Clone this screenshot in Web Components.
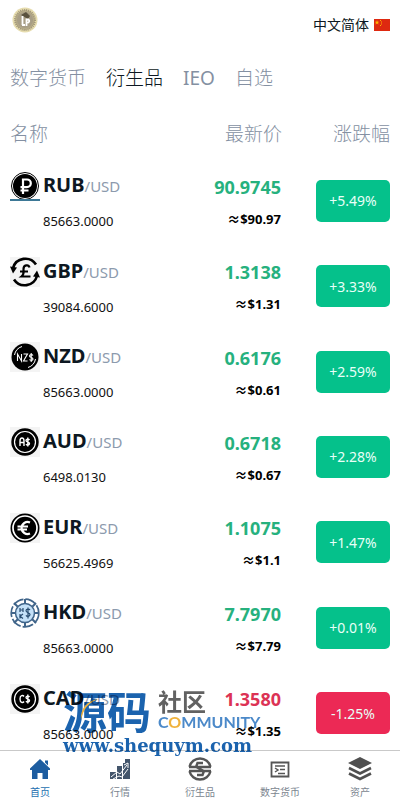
<!DOCTYPE html>
<html lang="zh-CN">
<head>
<meta charset="utf-8">
<meta name="viewport" content="width=device-width, initial-scale=1">
<title>行情</title>
<style>
body{margin:0;background:#fff;color:#0d1822;font-family:"Noto Sans","Noto Sans CJK SC",sans-serif}
</style>
</head>
<body>
<market-app></market-app>
<script>
const define=(name,html)=>customElements.define(name,class extends HTMLElement{
  connectedCallback(){
    if(this.shadowRoot)return;
    const root=this.attachShadow({mode:'open'});
    const t=document.createElement('template');
    t.innerHTML=typeof html==='function'?html(this):html;
    root.append(t.content.cloneNode(true));
  }
});
const coins={
RUB:`<circle cx="15" cy="15" r="13.500" fill="#fff" stroke="#000" stroke-width="1"/><circle cx="15" cy="15" r="12" fill="#000"/><path d="M13 23V8.500h4a3.800 3.800 0 0 1 0 7.600H10.500M10.500 19.500h8" fill="none" stroke="#fff" stroke-width="2.200"/><path d="M0 29h30" stroke="#3d7896" stroke-width="2"/>`,
GBP:`<path fill="#f4f4f4" d="M0 0h30v30H0z"/><g fill="none" stroke="#000" stroke-width="2.600"><path d="M3 11A12.800 12.800 0 0 1 26 7.500M27 19A12.800 12.800 0 0 1 4 22.500"/><path d="M19.500 10.500c-1-3.500-6-2.500-6 1.500 0 3 1 5-2 7.500h9M10 14.500h8" stroke-width="2.200"/></g><path d="M0 9.500l7 1-4 6zM30 20.500l-7-1 4-6z"/>`,
NZD:`<path fill="#f4f4f4" d="M0 0h30v30H0z"/><circle cx="15" cy="15" r="13.500"/><path d="M4.500 13A11 11 0 0 1 12 4.500M25.500 17A11 11 0 0 1 18 25.500" fill="none" stroke="#fff"/><path d="M7.500 19v-7l4 7v-7M13.500 12h4l-4 7h4M23 13.500c-1-1.500-3.500-1-3.500.5 0 2 3.500 1 3.500 3 0 1.500-2.500 2-3.500.5M21.200 11v9" fill="none" stroke="#fff" stroke-width="1.100"/>`,
AUD:`<path fill="#f4f4f4" d="M0 0h30v30H0z"/><circle cx="15" cy="15" r="13.700"/><circle cx="15" cy="15" r="10.500" fill="none" stroke="#fff" stroke-width="1.200"/><path d="M10 19v-5q0-3 2-3t2 3v5M10 15.500h4M19.500 13c-1-1.500-3.500-1-3.500.6 0 2 3.500 1 3.500 3 0 1.600-2.500 2-3.500.5M17.800 10.500v9" fill="none" stroke="#fff" stroke-width="1.400"/>`,
EUR:`<path fill="#f4f4f4" d="M0 0h30v30H0z"/><circle cx="15" cy="15" r="14.500"/><circle cx="15" cy="15" r="12" fill="none" stroke="#fff" stroke-width="1.700"/><path d="M20 9.500a6 6 0 1 0 0 11M7.500 13.500H18M7.500 16.500H17" fill="none" stroke="#fff" stroke-width="2.200"/>`,
HKD:`<circle cx="15" cy="15" r="13.800" fill="#fff" stroke="#40658a" stroke-width="1.700" stroke-dasharray="11 2"/><path d="M15 1v5M4 5l4 4M1 15h5M4 25l4-4M15 29v-5M26 25l-4-4M29 15h-5M26 5l-4 4" stroke="#40658a" stroke-width="2"/><circle cx="15" cy="15" r="9.500" fill="#c4e1f8" stroke="#40658a" stroke-width="1.500"/><path d="M10 10v4M13 10v4M10 12h3M10 16v4.500M13 16l-3 2.200 3 2.300M20 12c-1-1.500-4-1-4 .8 0 2.200 4 1.600 4 3.800 0 2-3 2.400-4 .8M18 9.500v11" fill="none" stroke="#284c70" stroke-width="1.200"/>`,
CAD:`<path fill="#f4f4f4" d="M0 0h30v30H0z"/><circle cx="15" cy="15" r="13.700"/><circle cx="15" cy="15" r="10.500" fill="none" stroke="#fff" stroke-width="1.200"/><path d="M14 12.500c-1-1.500-4-1.500-4 2.500s3 4 4 2.500M19.500 13c-1-1.500-3.500-1-3.500.6 0 2 3.500 1 3.500 3 0 1.600-2.500 2-3.500.5M17.800 10.500v9" fill="none" stroke="#fff" stroke-width="1.400"/>`
};
const navs={
home:`<path fill="#1d5da0" d="M12 2 22 11.500V13h-2v9h-5.500v-6h-5v6H4v-9H2v-1.500zM17 3.500h3v5l-3-3z"/>`,
chart:`<path fill="#43556b" d="M2 15h6v7H2zM9 9h5v13H9zM15 6h3v16h-3zM17 2h5v20h-5z"/><path d="M3 20l6-5 3 2 7-9M16 8l4-2v5M5 22l6-3 3 1 6-8" fill="none" stroke="#fff" stroke-width="1"/>`,
swap:`<g fill="none" stroke="#555" stroke-width="2.400"><path d="M1.500 9.700A10.800 10.800 0 0 1 22.500 9.700M22.500 14.300A10.800 10.800 0 0 1 1.500 14.300"/><path d="M1 10h8M15 6H9.500L8 10l8 4-1.500 4H9M15 14h8M9 10h14M1 14h14"/></g>`,
news:`<path d="M3.500 5.500h17v14h-17z" fill="none" stroke="#555" stroke-width="1.800"/><path d="M7 9h10M12 12.500h5M10 16.500h7M7 11l3 2-3 2" fill="none" stroke="#555" stroke-width="1.500"/>`,
stack:`<path fill="#505050" d="M12 0 24 6 12 12 0 6z"/><path d="M1 11l11 5.500L23 11M1 16.500 12 22l11-5.500" fill="none" stroke="#505050" stroke-width="2.600"/>`
};
define('site-header',`<style>
:host{display:flex;align-items:center;justify-content:space-between;height:40px;padding:0 10px}
.logo{display:block;margin-left:2px}
button{display:flex;align-items:center;gap:5px;border:0;background:none;padding:0;margin-top:10px;font:14px/20px "Noto Sans","Noto Sans CJK SC",sans-serif;color:#0d1822}
svg{display:block}
</style>
<svg class="logo" width="26" height="26" viewBox="0 0 26 26"><circle cx="13" cy="13" r="12.500" fill="#e6dcae"/><circle cx="13" cy="13" r="10" fill="#b5aa87" stroke="#a0967a" stroke-width="2" stroke-dasharray="1 1"/><circle cx="13" cy="13" r="8" fill="#a89e86"/><path d="M9 8l5-3 4 4-2 3z" fill="#5a523e"/><path d="M10.500 9v9M10 18h3M14.500 19v-6.500h2q2 2-1 3.500" fill="none" stroke="#fff" stroke-width="1.800"/></svg>
<button type="button">中文简体<svg width="16" height="12" viewBox="0 0 16 12"><path fill="#de2910" d="M0 0h16v12H0z"/><path fill="#ffb400" d="M3 1l.6 1.700h1.700L4 3.800l.5 1.700L3 4.500 1.500 5.500 2 3.800.7 2.700h1.700zM6 1h1v1H6zM7 2.500h1v1H7zM7 4.500h1v1H7zM6 6h1v1H6z"/></svg></button>`);
define('market-tabs',`<style>
:host{display:flex;gap:20px;padding:24px 10px 0}
button{border:0;background:none;padding:0;font:300 19px/28px "Noto Sans","Noto Sans CJK SC",sans-serif;color:#8490a2}
.on{color:#0d1822}
.latin{font-weight:400}
</style><button type="button">数字货币</button><button type="button" class="on">衍生品</button><button type="button" class="latin">IEO</button><button type="button">自选</button>`);
define('list-head',`<style>
:host{display:grid;grid-template-columns:1fr 1fr 88px;column-gap:20px;padding:28px 10px 10px;font-weight:300;font-size:19px;line-height:28px;color:#8490a2}
span+span{text-align:right}
</style><span>名称</span><span>最新价</span><span>涨跌幅</span>`);
define('coin-row',e=>{const[s,v,p,u,c]=e.getAttribute('data').split(',');return`<style>
:host{display:grid;grid-template-columns:30px 1fr auto 74px;align-items:center;padding:0 10px}
svg{display:block;margin-bottom:29px}
.name{padding-left:3px;padding-top:1px}
b{font-size:20px;line-height:28px}
.name span{font-size:15px;color:#8c9aad}
.sub{font-size:13px;line-height:20px;padding-top:12px;color:#111}
.price{text-align:right;font-weight:700;margin-right:35px}
.p{font-size:18px;line-height:28px;color:${c[0]==='-'?'#dc3355':'#26b17e'}}
.u{font-size:13px;line-height:20px;padding-top:8px;color:#000}
.badge{display:grid;place-items:center;height:42px;border-radius:5px;font-size:14px;color:#e8fff7;background:${c[0]==='-'?'#ec2955':'#05c18b'}}
</style><svg width="30" height="30" viewBox="0 0 30 30">${coins[s]}</svg>
<div class="name"><div><b>${s}</b><span>/USD</span></div><div class="sub">${v}</div></div>
<div class="price"><div class="p">${p}</div><div class="u">≈$${u}</div></div><div class="badge">${c}</div>`});
define('nav-item',e=>`<style>
:host{flex:1;display:block}
a{display:flex;flex-direction:column;align-items:center;gap:3px;padding-top:6px;font-size:10px;line-height:16px;color:${e.hasAttribute('active')?'#1d6fb0':'#7b858f'};text-decoration:none}
</style><a href="#"><svg width="24" height="24" viewBox="0 0 24 24">${navs[e.getAttribute('icon')]}</svg><slot></slot></a>`);
define('bottom-nav',`<style>:host{position:fixed;inset:auto 0 0;display:flex;height:49px;border-top:1px solid #c9c9c9;background:#fff}</style>
<nav-item icon="home" active>首页</nav-item><nav-item icon="chart">行情</nav-item><nav-item icon="swap">衍生品</nav-item><nav-item icon="news">数字货币</nav-item><nav-item icon="stack">资产</nav-item>`);
define('site-mark',`<style>
:host{position:fixed;z-index:2;left:63px;bottom:44px;pointer-events:none;mix-blend-mode:multiply;color:#1b63ae}
.top{display:flex;gap:6px;align-items:center}
.big{display:grid;position:relative;font:700 44px/44px "Noto Sans CJK SC",sans-serif}
svg{position:absolute;left:16px;top:8px}
.cn{padding-left:1px;font:700 24px/24px "Noto Sans CJK SC",sans-serif;color:#626262}
.en{padding-left:1px;font:700 16px/18px Lato,sans-serif;color:#4b89c9}
i{font-style:normal;color:#f0b23c}
.url{padding-top:4px;font:700 18px/20px "DejaVu Serif",serif}
</style><div class="top"><div class="big">源码<svg width="22" height="26" viewBox="0 0 22 26"><path d="M2 24C1 13 8 4 20 3 10 6 4 13 2 24z" fill="#f0b23c"/></svg></div><div><div class="cn">社区</div><div class="en">C<i>O</i>MMUNITY</div></div></div><div class="url">www.shequym.com</div>`);
define('market-app',`<style>
:host{display:flex;flex-direction:column;box-sizing:border-box;min-height:100vh;padding-bottom:44px}
main{flex:1;display:grid;grid-auto-rows:1fr}
</style><site-header></site-header><market-tabs></market-tabs><list-head></list-head>
<main>
<coin-row data="RUB,85663.0000,90.9745,90.97,+5.49%"></coin-row>
<coin-row data="GBP,39084.6000,1.3138,1.31,+3.33%"></coin-row>
<coin-row data="NZD,85663.0000,0.6176,0.61,+2.59%"></coin-row>
<coin-row data="AUD,6498.0130,0.6718,0.67,+2.28%"></coin-row>
<coin-row data="EUR,56625.4969,1.1075,1.1,+1.47%"></coin-row>
<coin-row data="HKD,85663.0000,7.7970,7.79,+0.01%"></coin-row>
<coin-row data="CAD,85663.0000,1.3580,1.35,-1.25%"></coin-row>
</main><bottom-nav></bottom-nav><site-mark></site-mark>`);
</script>
</body>
</html>
